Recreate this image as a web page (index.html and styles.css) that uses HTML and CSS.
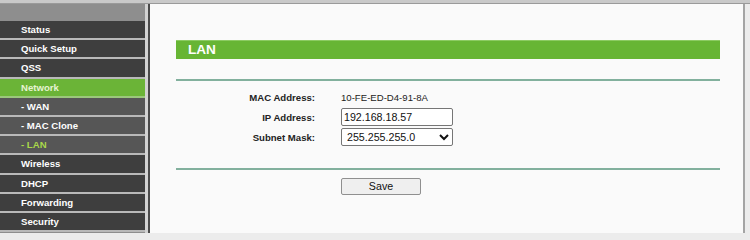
FILE: index.html
```html
<!DOCTYPE html>
<html>
<head>
<meta charset="utf-8">
<link rel="stylesheet" href="styles.css">
</head>
<body>
<div class="topbar"></div>
<div class="main">
  <nav class="sidebar">
    <div class="side-head"></div>
    <div class="item">Status</div>
    <div class="item">Quick Setup</div>
    <div class="item">QSS</div>
    <div class="item active">Network</div>
    <div class="item sub">- WAN</div>
    <div class="item sub">- MAC Clone</div>
    <div class="item sub current">- LAN</div>
    <div class="item">Wireless</div>
    <div class="item">DHCP</div>
    <div class="item">Forwarding</div>
    <div class="item">Security</div>
  </nav>
  <section class="content">
    <div class="title">LAN</div>
    <div class="rule rule-top"></div>
    <div class="form">
      <div class="label">MAC Address:</div>
      <div class="value">10-FE-ED-D4-91-8A</div>
      <div class="label">IP Address:</div>
      <div class="value"><input class="field" type="text" value="192.168.18.57"></div>
      <div class="label">Subnet Mask:</div>
      <div class="value"><select class="field sel"><option>255.255.255.0</option></select></div>
    </div>
    <div class="rule rule-bottom"></div>
    <div class="actions"><button class="btn">Save</button></div>
  </section>
  <div class="edge"></div>
</div>
</body>
</html>
```
FILE: styles.css
```css
html, body {
  margin: 0;
  padding: 0;
}
body {
  width: 750px;
  height: 233px;
  overflow: hidden;
  background: #ececec;
  font-family: "Liberation Sans", Arial, sans-serif;
}
.topbar {
  height: 3px;
  background: #c9c9c9;
  border-bottom: 1px solid #9a9a9a;
}
.main {
  display: flex;
  height: 229px;
}
.sidebar {
  width: 145px;
  flex: none;
  background: #8e8e8e;
  border-right: 3px solid #d2d2d2;
  overflow: hidden;
}
.side-head {
  height: 17px;
}
.item {
  height: 17.2px;
  line-height: 17.2px;
  border-bottom: 2px solid #b9b9b9;
  background: #3e3e3e;
  color: #ffffff;
  font-weight: bold;
  font-size: 9.6px;
  padding-left: 21px;
}
.item.sub {
  background: #565656;
}
.item.active {
  background: #6bb437;
  color: #e6f3d2;
  border-bottom-color: #9bc77c;
}
.item.current {
  color: #a9d84a;
}
.content {
  box-sizing: border-box;
  flex: none;
  width: 597px;
  background: #fafafa;
  border-left: 2px solid #4a4a4a;
  border-right: 2px solid #a4a4a4;
  padding: 36px 23px 0 26px;
}
.title {
  height: 18px;
  line-height: 18px;
  background: #67b534;
  border-top: 1px solid #8ccb62;
  color: #ffffff;
  font-weight: bold;
  font-size: 13.6px;
  padding-left: 12px;
}
.rule {
  border-top: 2px solid #82b09d;
}
.rule-top {
  margin-top: 20px;
}
.form {
  display: grid;
  grid-template-columns: 139px 1fr;
  column-gap: 26px;
  grid-auto-rows: 20px;
  margin-top: 6px;
  font-size: 9.6px;
  color: #222;
}
.label {
  font-weight: bold;
  display: flex;
  align-items: center;
  justify-content: flex-end;
}
.value {
  display: flex;
  align-items: center;
}
.field {
  box-sizing: border-box;
  width: 112px;
  height: 18px;
  border: 1px solid #767676;
  border-radius: 2px;
  font-family: "Liberation Sans", Arial, sans-serif;
  font-size: 10.67px;
  color: #111;
  background: #fff;
  padding: 0 2px;
  margin: 0;
}
.sel {
  padding: 0 0 0 1px;
}
.rule-bottom {
  margin-top: 21px;
}
.actions {
  padding-left: 165px;
  margin-top: 6px;
}
.btn {
  box-sizing: border-box;
  width: 80px;
  height: 17px;
  margin: 0;
  padding: 0;
  border: 1px solid #8f8f8f;
  border-radius: 2px;
  background: #efefef;
  font-family: "Liberation Sans", Arial, sans-serif;
  font-size: 10.67px;
  color: #111;
}
.edge {
  flex: 1;
}
```
